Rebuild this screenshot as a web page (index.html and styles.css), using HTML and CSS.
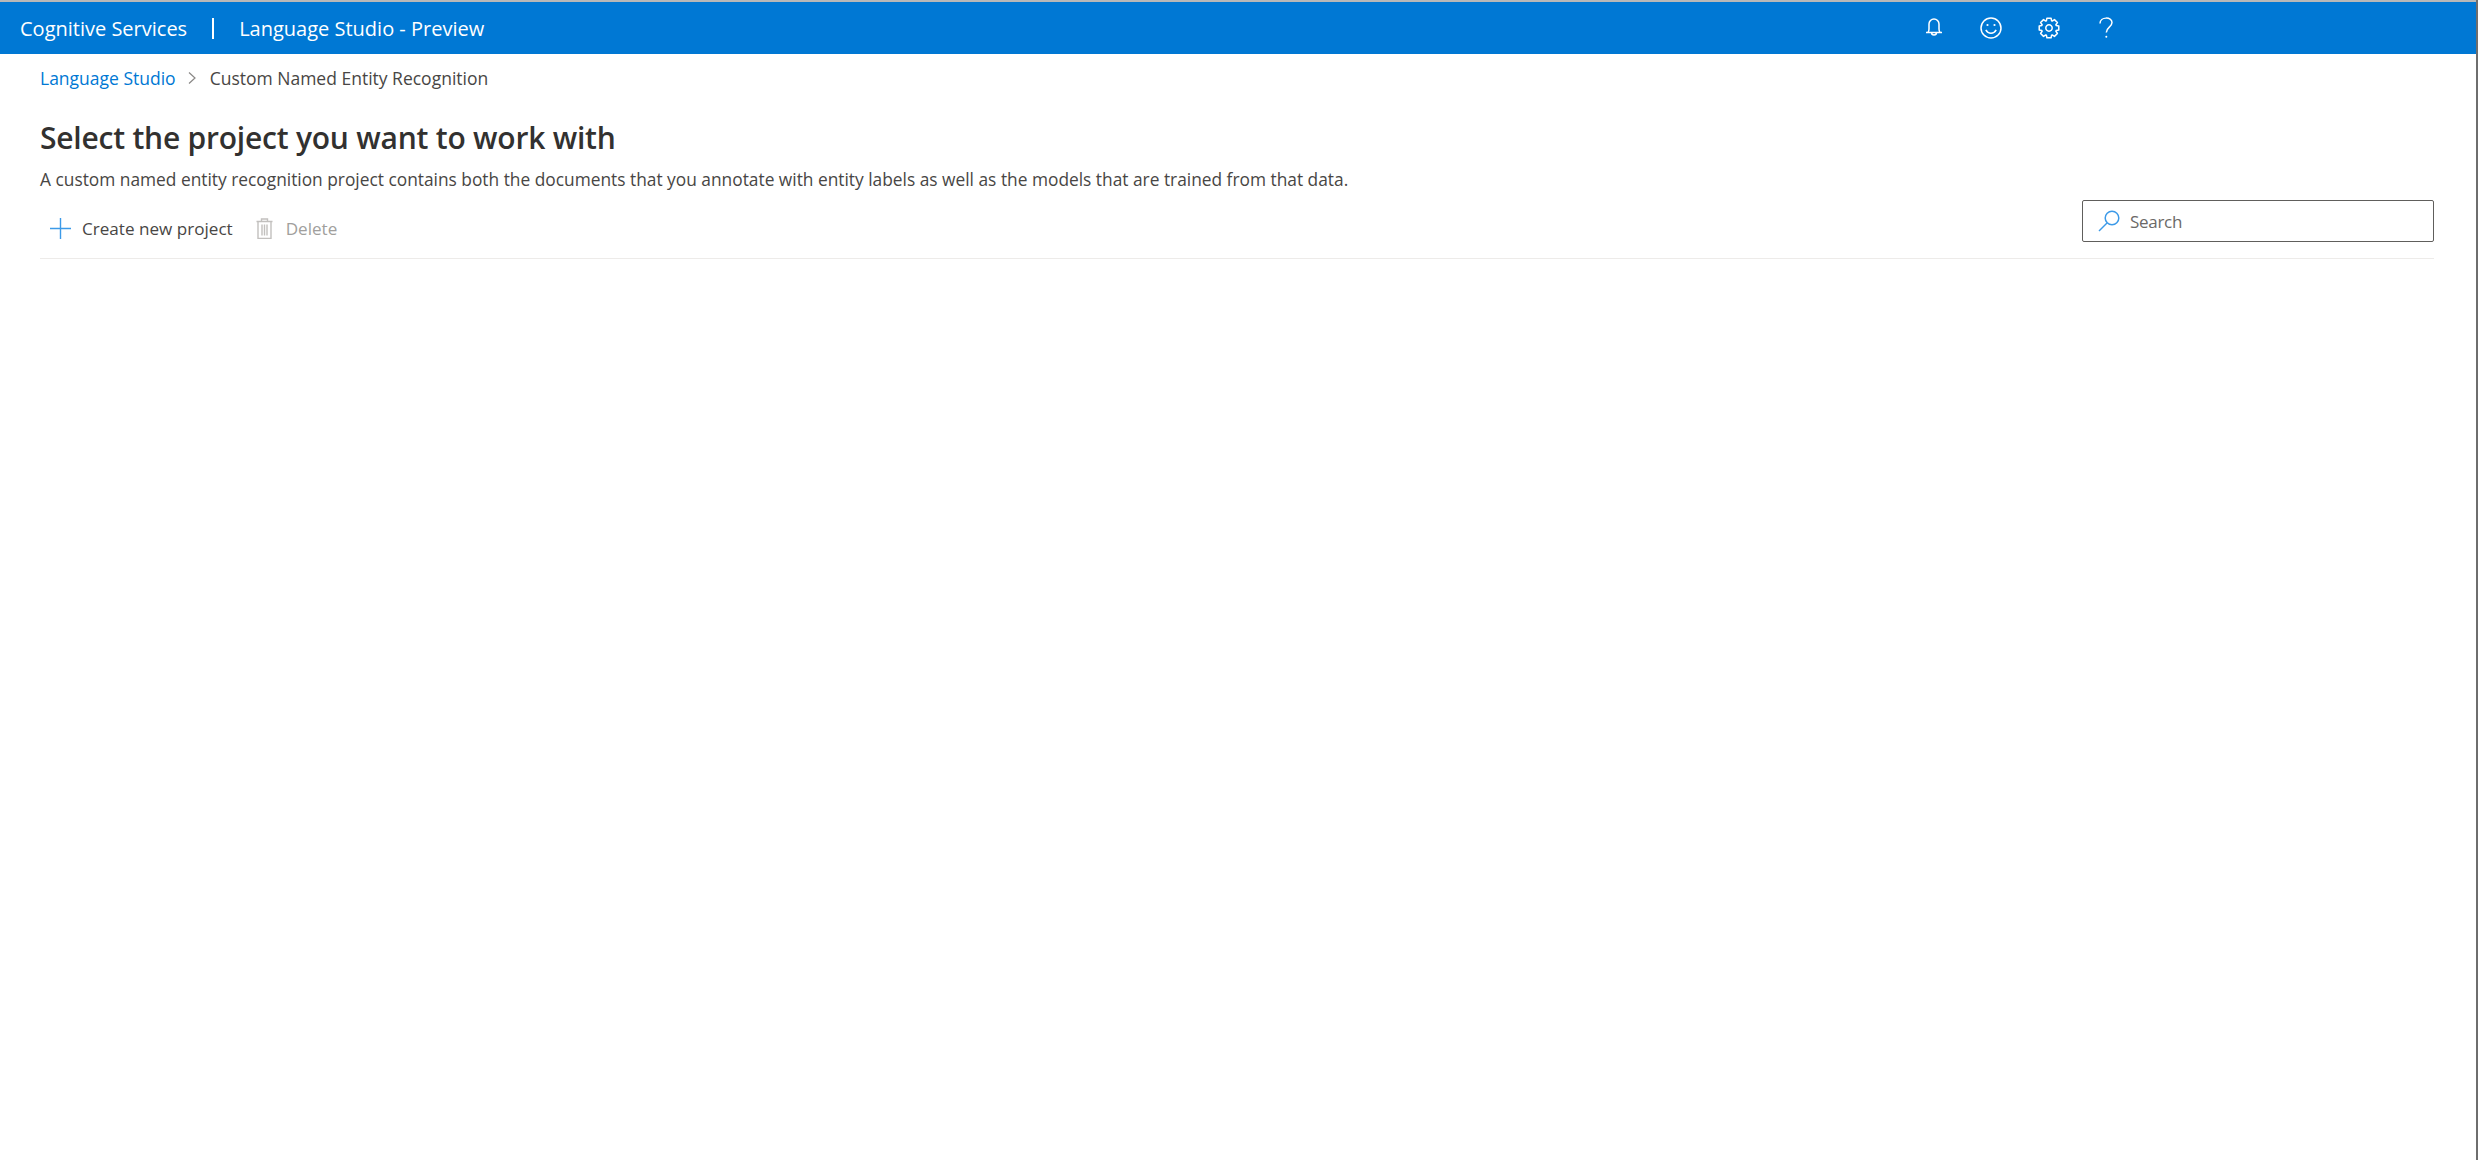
FILE: index.html
```html
<!DOCTYPE html>
<html lang="en">
<head>
<meta charset="utf-8">
<title>Language Studio - Preview</title>
<link rel="stylesheet" href="styles.css">
</head>
<body>
<div class="app">
  <span class="edge-gap"></span>
  <header class="topbar">
    <div class="brand">
      <span>Cognitive Services</span>
      <span class="sep"></span>
      <span>Language Studio - Preview</span>
    </div>
    <div class="tools">
      <span class="tool"><svg viewBox="0 0 22 22"><path d="M3 15.500h16M4.800 15.500c1-.8 1.200-2 1.200-3.500V7a5 5 0 0 1 10 0v5c0 1.500.2 2.700 1.200 3.500M8.500 15.500c0 3.300 5 3.300 5 0"/></svg></span>
      <span class="tool"><svg viewBox="0 0 22 22"><circle cx="11" cy="11" r="10"/><path d="M5.800 12.800c2.500 4.500 7.900 4.500 10.400 0"/><circle class="dot" cx="7.500" cy="8" r="1.100"/><circle class="dot" cx="14.500" cy="8" r="1.100"/></svg></span>
      <span class="tool"><svg viewBox="0 0 22 22"><g transform="translate(11 11)"><circle r="3.200"/><polygon points="-2.080,-9.780 2.080,-9.780 2.600,-7.140 3.210,-6.890 5.450,-8.390 8.390,-5.450 6.890,-3.210 7.140,-2.600 9.780,-2.080 9.780,2.080 7.140,2.600 6.890,3.210 8.390,5.450 5.450,8.390 3.210,6.890 2.600,7.140 2.080,9.780 -2.080,9.780 -2.600,7.140 -3.210,6.890 -5.450,8.390 -8.390,5.450 -6.890,3.210 -7.140,2.600 -9.780,2.080 -9.780,-2.080 -7.140,-2.600 -6.890,-3.210 -8.390,-5.450 -5.450,-8.390 -3.210,-6.890 -2.600,-7.140"/></g></svg></span>
      <span class="tool"><svg viewBox="0 0 22 22"><path d="M5 6.500C5-.5 17-.5 17 5.500c0 4.500-5.700 4.800-5.700 10"/><circle class="dot" cx="11.300" cy="19.800" r="1"/></svg></span>
    </div>
  </header>

  <nav class="crumbs">
    <span class="crumb-link">Language Studio</span>
    <svg class="chev" viewBox="0 0 10 14"><path d="M2 1.500 8 7l-6 5.500"/></svg>
    <span class="crumb-current">Custom Named Entity Recognition</span>
  </nav>

  <main class="content">
    <h1 class="title">Select the project you want to work with</h1>
    <p class="desc">A custom named entity recognition project contains both the documents that you annotate with entity labels as well as the models that are trained from that data.</p>
    <div class="commandbar">
      <div class="actions">
        <button class="cmd">
          <svg class="cmd-icon" viewBox="0 0 21 21"><path class="blue" d="M10.500 0v21M0 10.500h21"/></svg>
          <span>Create new project</span>
        </button>
        <button class="cmd disabled">
          <svg class="cmd-icon" viewBox="0 0 21 21"><path class="grey" d="M2.500 3.500h16M7.500 3.500V1h6v2.500M4 3.500v17h13v-17M8 6.500v11M10.500 6.500v11M13 6.500v11"/></svg>
          <span>Delete</span>
        </button>
      </div>
      <div class="search">
        <svg class="search-icon" viewBox="0 0 22 22"><circle cx="14" cy="8" r="6.800"/><path d="M9 13 1 21"/></svg>
        <span>Search</span>
      </div>
    </div>
  </main>
</div>
</body>
</html>
```
FILE: styles.css
```css
* { box-sizing: border-box; }
html, body { margin: 0; height: 100%; background: #fff; }
body { font-family: "Open Sans", "Noto Sans", sans-serif; color: #323130; }
.app { position: relative; height: 1160px; border-right: 2px solid #6e6e6e; overflow: hidden; }
.edge-gap { position: absolute; top: 10px; right: -2px; width: 2px; height: 31px; background: #0078d4; }
.topbar {
  height: 54px; background: #0078d4; color: #fff; border-top: 2px solid #b8b8b8;
  display: flex; align-items: center; justify-content: space-between;
  padding-left: 20px; font-size: 20px;
}
.brand { display: flex; align-items: center; }
.sep { width: 2px; height: 21px; background: #fff; margin: 0 25px 0 25px; }
.tools { display: flex; align-items: center; margin-right: 341px; }
.tool { width: 57.500px; height: 22px; display: flex; justify-content: center; }
.tool svg { width: 22px; height: 22px; fill: none; stroke: #fff; stroke-width: 1.500; stroke-linejoin: round; }
.tool .dot { fill: #fff; stroke: none; }
.crumbs { display: flex; align-items: center; height: 48px; padding-left: 40px; font-size: 17.500px; color: #484644; }
.crumb-link { color: #0078d4; }
.chev { width: 10px; height: 14px; margin: 0 13px 0 11px; fill: none; stroke: #8a8886; stroke-width: 1.200; }
.content { padding: 0 0 0 40px; width: 2434px; }
.title { margin: 15px 0 0; font-size: 30px; font-weight: 600; line-height: 42px; letter-spacing: -.22px; }
.desc { margin: 8px 0 0; font-size: 17.340px; line-height: 24px; color: #484644; }
.commandbar {
  display: flex; justify-content: space-between; align-items: flex-start;
  height: 68px; padding-top: 9px; border-bottom: 1px solid #edebe9;
}
.actions { display: flex; align-items: center; height: 24px; margin-top: 16px; padding-left: 10px; gap: 21px; }
.cmd {
  display: flex; align-items: center; gap: 11px; padding: 0; border: 0; background: none;
  font: inherit; font-size: 17.100px; color: #484644;
}
.cmd.disabled { color: #a19f9d; }
.cmd-icon { width: 21px; height: 21px; fill: none; stroke-width: 1.400; }
.blue { stroke: #3c9ae8; }
.grey { stroke: #c2c0be; }
.search {
  width: 352px; height: 42px; border: 1px solid #605e5c; border-radius: 2px;
  display: flex; align-items: center; gap: 10px; padding-left: 15px;
  font-size: 17px; letter-spacing: -.3px; color: #6b6967;
}
.search-icon { width: 22px; height: 22px; fill: none; stroke: #3c9ae8; stroke-width: 1.500; }
```
